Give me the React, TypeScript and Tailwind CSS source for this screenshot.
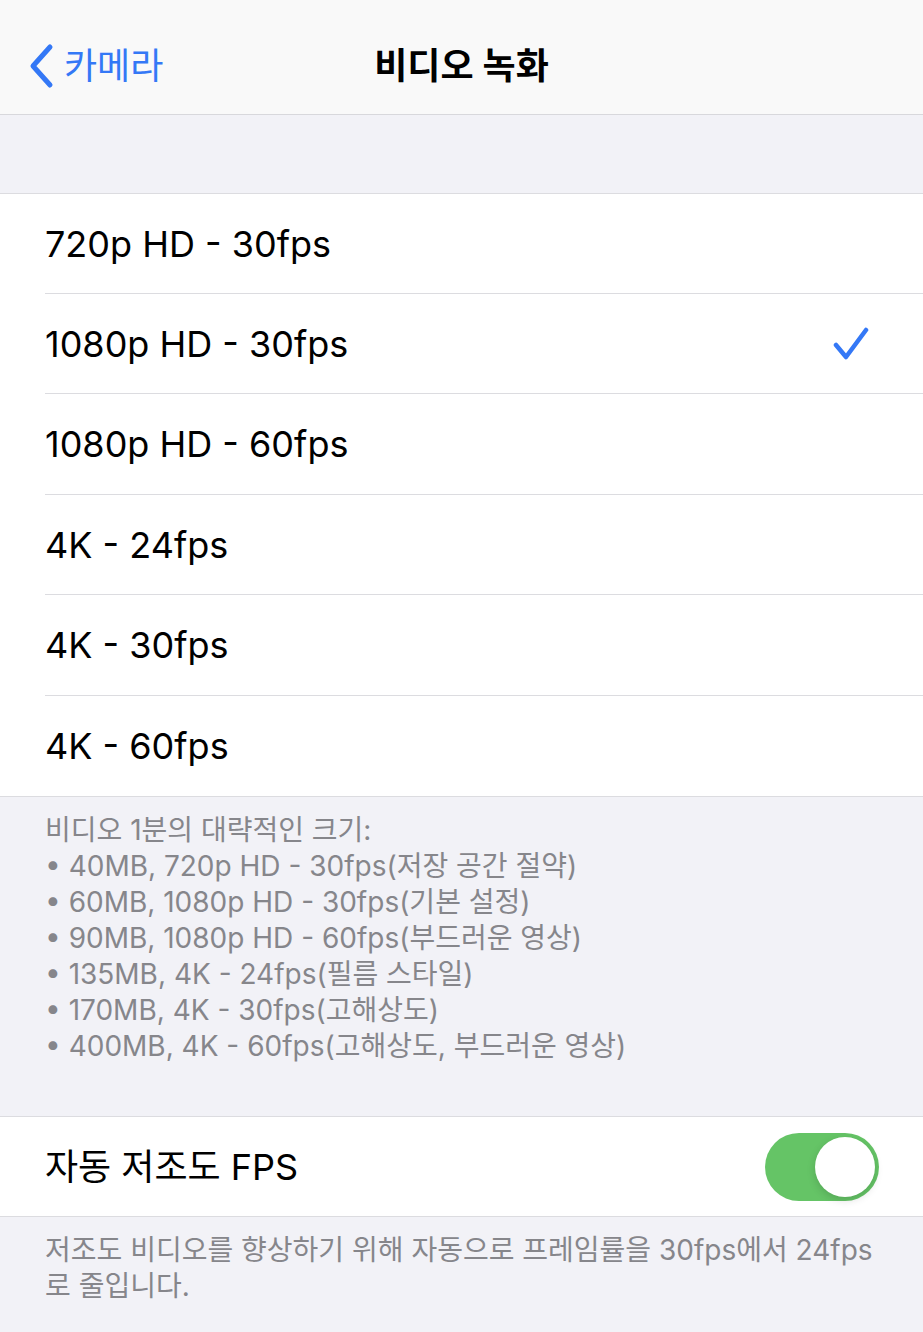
import React from "react";

const rows = [
  "720p HD - 30fps",
  "1080p HD - 30fps",
  "1080p HD - 60fps",
  "4K - 24fps",
  "4K - 30fps",
  "4K - 60fps",
];

const sizes = [
  "• 40MB, 720p HD - 30fps(저장 공간 절약)",
  "• 60MB, 1080p HD - 30fps(기본 설정)",
  "• 90MB, 1080p HD - 60fps(부드러운 영상)",
  "• 135MB, 4K - 24fps(필름 스타일)",
  "• 170MB, 4K - 30fps(고해상도)",
  "• 400MB, 4K - 60fps(고해상도, 부드러운 영상)",
];

export default function App() {
  return (
    <div
      className="w-[923px] h-[1332px] bg-[#f2f2f7] overflow-hidden"
      style={{ fontFamily: 'Inter, "Noto Sans CJK KR", sans-serif' }}
    >
      {/* Header */}
      <div className="relative h-[115px] pt-[16px] bg-[#f9f9f9] border-b border-[#d8d8dc] flex items-center">
        <div className="flex items-center pl-[26px] text-[#3478f6]">
          <svg width="32" height="46" viewBox="0 0 32 46" className="mt-[2px]">
            <path d="M24 4 L7 23 L24 42" fill="none" stroke="#3478f6" strokeWidth="5" strokeLinecap="round" strokeLinejoin="round" />
          </svg>
          <span className="ml-[6px] text-[36px] leading-none mt-[2px]">카메라</span>
        </div>
        <div className="absolute inset-0 pt-[16px] flex items-center justify-center pointer-events-none">
          <span className="text-[36px] font-semibold text-black leading-none mt-[2px]">비디오 녹화</span>
        </div>
      </div>

      {/* Gray band */}
      <div className="h-[79px] border-b border-[#dcdce0]" />

      {/* List */}
      <div className="bg-white border-b border-[#dcdce0]">
        {rows.map((r, i) => (
          <div key={r} className="pl-[45px]">
            <div
              className={
                "flex items-center justify-between pr-[54px] " +
                (i === 2 || i === 4 ? "h-[101px] " : "h-[100px] ") +
                (i < rows.length - 1 ? "border-b border-[#dcdce0]" : "")
              }
            >
              <span className="text-[36px] text-black leading-none">{r}</span>
              {i === 1 && (
                <svg width="36" height="36" viewBox="0 0 36 36">
                  <path d="M3 19 L13 31 L33 4" fill="none" stroke="#3478f6" strokeWidth="4.5" strokeLinecap="round" strokeLinejoin="round" />
                </svg>
              )}
            </div>
          </div>
        ))}
      </div>

      {/* Footer info */}
      <div className="pt-[15px] pb-[52px] px-[45px] text-[28px] leading-[36px] text-[#86868b]">
        <div>비디오 1분의 대략적인 크기:</div>
        {sizes.map((s) => (
          <div key={s}>{s}</div>
        ))}
      </div>

      {/* Toggle row */}
      <div className="bg-white border-y border-[#dcdce0] h-[101px] flex items-center justify-between pl-[45px] pr-[44px]">
        <span className="text-[36px] text-black leading-none">자동 저조도 FPS</span>
        <div className="w-[114px] h-[68px] rounded-full bg-[#65c466] flex items-center justify-end p-[4px]">
          <div className="w-[60px] h-[60px] rounded-full bg-white shadow-[0_3px_8px_rgba(0,0,0,0.15)]" />
        </div>
      </div>

      {/* Footer */}
      <div className="pt-[15px] px-[45px] text-[28px] leading-[36px] text-[#86868b]">
        저조도 비디오를 향상하기 위해 자동으로 프레임률을 30fps에서 24fps
        <br />로 줄입니다.
      </div>
    </div>
  );
}
